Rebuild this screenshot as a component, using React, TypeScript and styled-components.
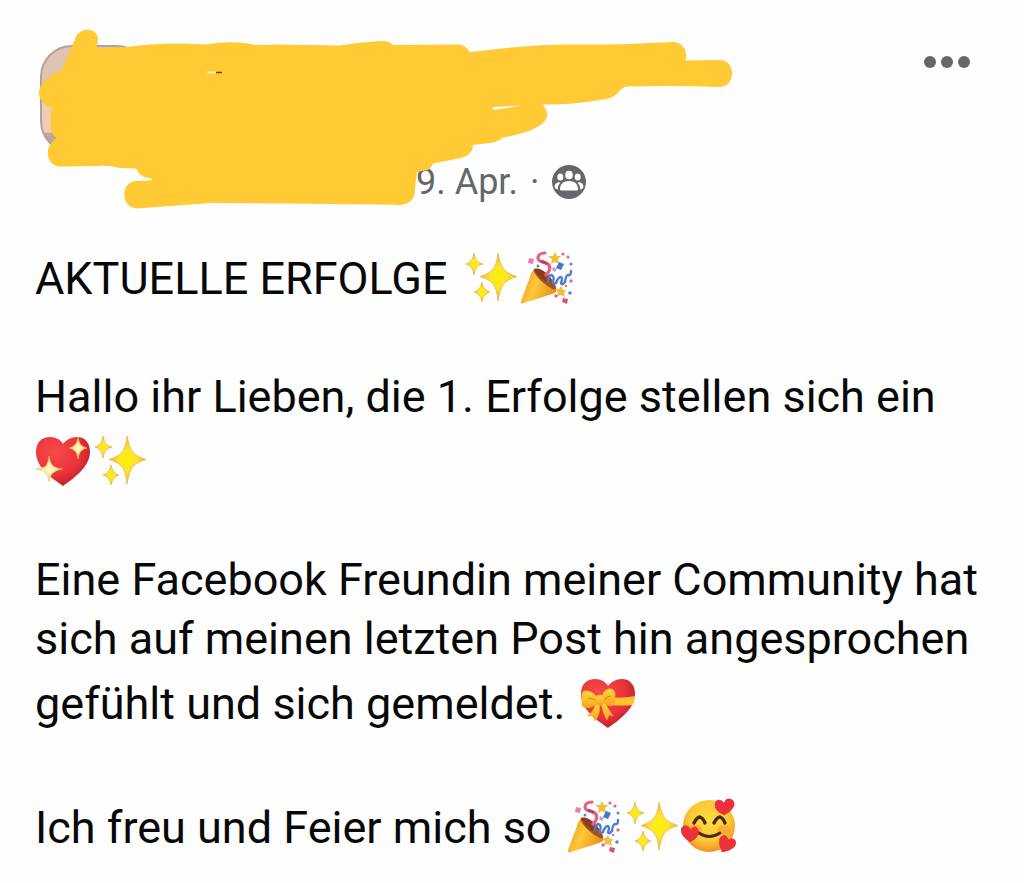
import React from 'react';
import styled, { createGlobalStyle } from 'styled-components';

const GlobalStyle = createGlobalStyle`
  * { box-sizing: border-box; }
  body { margin: 0; background: #fefefe; }
`;

const Post = styled.article`
  position: relative;
  min-height: 100vh;
  background: #fefefe;
  color: #080809;
  font-family: Roboto, "Liberation Sans", sans-serif;
  overflow: hidden;
`;

const Header = styled.header`
  display: flex;
  align-items: flex-start;
  padding: 45px 48px 39px 40px;
`;

const Avatar = styled.div`
  flex: none;
  width: 108px;
  height: 108px;
  border: 2px solid #b3a19f;
  border-radius: 32px;
  background: linear-gradient(#dfc4b3 0 35%, #efccb4 45% 82%, #c2a598 83%);
`;

const Meta = styled.div`
  display: flex;
  flex: 1;
  gap: 12px;
  align-items: center;
  padding: 115px 0 0 268px;
  color: #65676b;
  font-size: 36px;
  line-height: 44px;
`;

const MoreButton = styled.button`
  display: flex;
  padding: 9px 4px;
  border: 0;
  background: none;
  cursor: pointer;
`;

const Redaction = styled.svg`
  position: absolute;
  top: 0;
  left: 0;
  pointer-events: none;
`;

const Body = styled.div`
  padding: 0 35px 24px;
  font-size: 45px;
  line-height: 59px;
`;

const Paragraph = styled.p`
  margin: 0 0 59px;

  &:last-child { margin-bottom: 0; }
`;

const EmojiGroup = styled.span<{ $afterText?: boolean }>`
  margin-left: ${({ $afterText }) => ($afterText ? '4px' : '0')};
  white-space: nowrap;
`;

const EmojiImage = styled.svg`
  width: 57px;
  height: 57px;
  margin-top: 4px;
  vertical-align: -10px;
`;

const HiddenDefs = styled.svg`
  position: absolute;
  width: 0;
  height: 0;
`;

const Gradients = () => (
  <HiddenDefs aria-hidden="true">
    <defs>
      <radialGradient id="star">
        <stop offset="0" stopColor="#fff000" />
        <stop offset=".45" stopColor="#fde52c" />
        <stop offset="1" stopColor="#efb63c" />
      </radialGradient>
      <radialGradient id="glow">
        <stop offset="0" stopColor="#fffbd0" />
        <stop offset=".5" stopColor="#ffe995" />
        <stop offset="1" stopColor="#f7bd51" />
      </radialGradient>
      <radialGradient id="red" cx=".35" cy=".3" r=".8">
        <stop offset="0" stopColor="#f84a4a" />
        <stop offset=".6" stopColor="#ea323a" />
        <stop offset="1" stopColor="#b01a28" />
      </radialGradient>
      <linearGradient id="cone" x1="0" y1=".3" x2="1" y2=".7">
        <stop offset="0" stopColor="#e99a20" />
        <stop offset=".4" stopColor="#ffc83b" />
        <stop offset="1" stopColor="#e38b16" />
      </linearGradient>
      <linearGradient id="bow" x1="0" y1="0" x2="0" y2="1">
        <stop offset="0" stopColor="#ffd83b" />
        <stop offset="1" stopColor="#f5a51d" />
      </linearGradient>
      <radialGradient id="face" cx=".5" cy=".4" r=".6">
        <stop offset="0" stopColor="#ffdc42" />
        <stop offset=".65" stopColor="#ffc736" />
        <stop offset="1" stopColor="#ed9322" />
      </radialGradient>
    </defs>
  </HiddenDefs>
);

const Emoji = ({ label, children }: { label: string; children: React.ReactNode }) => (
  <EmojiImage viewBox="0 0 57 57" role="img" aria-label={label}>{children}</EmojiImage>
);

const Sparkles = () => (
  <Emoji label="Funkeln">
    <g fill="url(#star)" stroke="#e8b74b" strokeWidth=".8" strokeLinejoin="round">
      <path d="M35 6Q37 17 40.500 22Q45 27 54 29.500Q45 32 40.500 37Q37 42 35 54Q34 42 30 37Q26 32 17 29.500Q26 27 30 22Q34 17 35 6Z" />
      <path d="M11 6Q12 12 14 14Q16 16 20 17Q16 18 14 20Q12 22 11 28Q10 22 8 20Q6 18 3 17Q6 16 8 14Q10 12 11 6Z" />
      <path d="M19 35Q20 40 22 42Q24 44 27 45Q24 46 22 48Q20 50 19 55Q18 50 16 48Q14 46 11 45Q14 44 16 42Q18 40 19 35Z" />
    </g>
  </Emoji>
);

const Popper = () => (
  <Emoji label="Konfettibombe">
    <path d="M14 22Q11 25 10 30L1 54Q0 58 4 56L32 47Q38 45 36 41Z" fill="url(#cone)" />
    <path d="M14 22C19 19 38 36 36 42C32 45 11 27 14 22Z" fill="#a3541c" />
    <path d="M14 22C20 19 30 28 32 33Q26 37 22 32Q17 28 14 22Z" fill="#8c3b20" />
    <path d="M25 6C21 6 18 8 18 11C18 15 23 15 26 16C31 18 31 23 26 28" fill="none" stroke="#e36181" strokeWidth="3.2" strokeLinecap="round" />
    <path d="M21 14Q24 15 27 17" fill="none" stroke="#b83f62" strokeWidth="2.5" />
    <path d="M28 34Q28 29 31 28Q35 29 33 35Q33 38 36 36Q38 30 41 30Q43 31 41 36Q42 39 45 35Q46 28 48 28Q51 29 51 24" fill="none" stroke="#4b7fcd" strokeWidth="2.400" strokeLinecap="round" strokeLinejoin="round" />
    <g fill="#f2bd3d">
      <path d="M35 5l2 4 4 0-3 3 1 5-4-2-4 2 1-5-4-3 5 0z" />
      <path d="M41 39l2 4 3 0-2 3 1 4-4-2-4 1 1-4-3-3 4 0z" />
    </g>
    <path d="M9 11l5 1-1 5-5-1z" fill="#ec7ab0" />
    <path d="M39 15l5 2-3 6-5-2z" fill="#3e7bd3" />
    <path d="M43 51l5 1-1 5-5-2z" fill="#da5471" />
    <path d="M33 20l4 2-2 3-3-2z" fill="#cd94e0" />
    <g fill="#df6797">
      <circle cx="43" cy="7" r="1.6" /><circle cx="48" cy="10" r="1.6" />
      <circle cx="51" cy="34" r="1.7" /><circle cx="36" cy="49" r="1.7" />
      <circle cx="46" cy="39" r="1.2" />
    </g>
    <g fill="#508bd8">
      <circle cx="18" cy="19" r="1.5" /><circle cx="51" cy="17" r="1.5" /><circle cx="50" cy="46" r="1.8" />
    </g>
  </Emoji>
);

const heart = 'M28 56C20 50 1 39 1 22C1 12 7 7 15 7C21 7 26 10 28 14C31 10 36 7 42 7C50 7 55 13 55 22C55 38 36 50 28 56Z';

const SparklingHeart = () => (
  <Emoji label="Funkelndes Herz">
    <path d={heart} fill="url(#red)" />
    <g fill="url(#glow)" stroke="#f5bb4f" strokeWidth=".5">
      <path d="M43 7Q44 13 46 15Q48 17 52 18Q48 19 46 21Q44 23 43 29Q42 23 40 21Q38 19 34 18Q38 17 40 15Q42 13 43 7Z" />
      <path d="M14 26Q15 33 18 36Q21 38 28 39Q21 40 18 43Q15 45 14 52Q13 45 11 43Q8 40 1 39Q8 38 11 36Q13 33 14 26Z" />
    </g>
  </Emoji>
);

const GiftHeart = () => (
  <Emoji label="Herz mit Schleife">
    <path d={heart} fill="url(#red)" />
    <path d="M30 25Q42 27 55 24L53 33Q42 34 30 33Z" fill="#ffc52c" />
    <g fill="url(#bow)" stroke="#efa826" strokeWidth=".5" strokeLinejoin="round">
      <path d="M16 31Q13 41 7 44L13 44L15 49Q20 43 20 33Z" />
      <path d="M21 31Q23 42 27 48L29 43L33 44Q28 37 25 30Z" />
      <path d="M18 26Q11 17 4 19Q1 20 2 28Q1 36 6 36Q13 36 18 31Z" />
      <path d="M22 24Q25 15 32 17Q36 19 35 26Q36 33 31 34Q26 33 22 30Z" />
      <rect x="16" y="23" width="8" height="10" rx="3" />
    </g>
    <path d="M8 26Q12 26 15 28M25 27Q28 24 31 24" fill="none" stroke="#d98212" strokeWidth="1" />
  </Emoji>
);

const LoveFace = () => (
  <Emoji label="Lächelndes Gesicht mit Herzen">
    <circle cx="28" cy="30" r="26" fill="url(#face)" />
    <ellipse cx="14" cy="34" rx="7" ry="5" fill="#f78231" opacity=".4" />
    <ellipse cx="43" cy="34" rx="7" ry="5" fill="#f78231" opacity=".4" />
    <g fill="none" stroke="#4a2a13" strokeLinecap="round">
      <path d="M13 27Q16 21 19 21Q22 22 24 27M33 27Q36 21 39 21Q42 22 44 27" strokeWidth="3.400" />
      <path d="M18 37Q28 44 39 37" strokeWidth="2.800" />
    </g>
    <g fill="#ed303c" stroke="#d52335" strokeWidth=".5">
      <path d="M43 19Q34 15 34 9Q34 4 38 4Q41 4 43 7Q45 2 49 3Q54 4 53 10Q51 15 43 19Z" />
      <path d="M9 46Q0 40 0 34Q1 29 6 30Q9 31 9 34Q13 29 16 32Q19 35 17 39Q15 43 9 46Z" />
      <path d="M41 56Q37 46 39 42Q42 38 45 40Q47 42 47 44Q51 41 54 44Q56 48 53 51Q49 55 41 56Z" />
    </g>
  </Emoji>
);

const GroupIcon = () => (
  <svg width="36" height="36" viewBox="0 0 36 36" role="img" aria-label="Gruppe">
    <circle cx="18" cy="18" r="17" fill="#65676b" />
    <g fill="#fefefe">
      <ellipse cx="18" cy="11" rx="3.800" ry="4.300" />
      <ellipse cx="9.300" cy="13" rx="3" ry="3.500" />
      <ellipse cx="26.700" cy="13" rx="3" ry="3.500" />
      <path d="M10.500 26.500Q8.500 26.500 9 24Q10 17 18 17Q26 17 27 24Q27.500 26.500 25.500 26.500Z" />
      <path d="M6.500 18.500Q8 18 9.500 18.800Q6.800 21 6.800 25.500Q3.500 25 3.500 22Q4 19 6.500 18.500Z" />
      <path d="M29.500 18.500Q28 18 26.500 18.800Q29.200 21 29.200 25.500Q32.500 25 32.500 22Q32 19 29.500 18.500Z" />
    </g>
  </svg>
);

export default function App() {
  return (
    <>
      <GlobalStyle />
      <Gradients />
      <Post>
        <Header>
          <Avatar />
          <Meta><time>9. Apr.</time><span>·</span><GroupIcon /></Meta>
          <MoreButton aria-label="Mehr">
            <svg width="50" height="16" viewBox="0 0 50 16" fill="#65676b" aria-hidden="true">
              <circle cx="8" cy="8" r="6" /><circle cx="25" cy="8" r="6" /><circle cx="42" cy="8" r="6" />
            </svg>
          </MoreButton>
        </Header>
        <Redaction width="740" height="215" viewBox="0 0 740 215" aria-hidden="true">
          <path
            fill="#ffca33"
            d="M63 70Q63 65 66 60L75 39C78 27 98 26 98 40Q98 44 96 48L127 47Q155 43 180 43.500L207 44.500Q224 41 244 43Q260 46 273 44.500L340 45.500Q370 41 385 41Q390 42 393 45L457 44.500Q466 44 469 52Q480 51 493 49.500Q540 44 575 44.500Q620 45 673 42C682 42 688 50 685.500 60.500L720 60C736 60 736 87 720 87Q693 86 667 86L627 86.500Q622 87 618 93Q612 99 600 100Q570 105 542 104.500C550 112 549 121 537 127Q528 133 502 138Q498 142 490 143L473 145Q473 155 461 158L433 163.500Q432 167 428 170L417 172L415 187Q416 204 400 205L380 204.500Q270 203 210 203L137 208.500C120 208 120 181 137 181L152 180.500L151 178Q141 179 136 168.500L120 168Q108 165 97 166L60 166.500C47 166 42 147 57 138Q49 133 51 122Q50 114 52 108C35 102 35 86 50 77Q55 71 63 70Z"
          />
          <path d="M493 107L523 105.500L493 110Z" fill="#fefefe" />
          <path d="M207 72.500H216" stroke="#fff2b0" strokeWidth="2" />
          <path d="M216 72.500H222" stroke="#5d4717" strokeWidth="1.500" />
        </Redaction>
        <Body>
          <Paragraph>
            AKTUELLE ERFOLGE <EmojiGroup $afterText><Sparkles /><Popper /></EmojiGroup>
          </Paragraph>
          <Paragraph>
            Hallo ihr Lieben, die 1. Erfolge stellen sich ein <EmojiGroup><SparklingHeart /><Sparkles /></EmojiGroup>
          </Paragraph>
          <Paragraph>
            Eine Facebook Freundin meiner Community hat sich auf meinen letzten Post hin angesprochen gefühlt und sich gemeldet. <EmojiGroup $afterText><GiftHeart /></EmojiGroup>
          </Paragraph>
          <Paragraph>
            Ich freu und Feier mich so <EmojiGroup $afterText><Popper /><Sparkles /><LoveFace /></EmojiGroup>
          </Paragraph>
        </Body>
      </Post>
    </>
  );
}
